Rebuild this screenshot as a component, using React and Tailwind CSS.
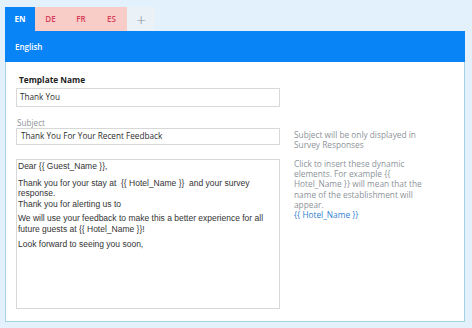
import React from "react";

export default function App() {
  const os = { fontFamily: '"Open Sans", "Noto Sans", sans-serif' };
  const body = { fontFamily: '"Liberation Sans", Arial, sans-serif' };
  return (
    <div className="w-[472px] h-[328px] bg-[#e2f1fb] pt-[7px] pl-[5px] overflow-hidden" style={os}>
      <div className="flex h-[24px] text-[8px] font-semibold">
        <div className="w-[30px] bg-[#0984f7] text-white flex items-center justify-center font-bold">EN</div>
        <div className="flex bg-[#f8cdc7] text-[#d6405a]">
          <div className="w-[31px] flex items-center justify-center">DE</div>
          <div className="w-[30px] flex items-center justify-center">FR</div>
          <div className="w-[31px] flex items-center justify-center">ES</div>
        </div>
        <div className="w-[28px] bg-[#ebf2f7] text-[#8a949c] flex items-center justify-center text-[17px] font-light leading-none">+</div>
      </div>
      <div className="w-[460px] h-[291px] border border-[#a6d2e6] border-t-0 bg-white flex flex-col">
        <div className="h-[31px] bg-[#0984f7] text-white text-[8px] font-semibold flex items-center pl-[10px] -mx-px">English</div>
        <div className="flex pl-[10px] pt-[12px]">
          <div className="w-[264px] flex flex-col">
            <div className="text-[8.3px] font-bold text-[#1e1e1e] leading-[12px] pl-[3px]">Template Name</div>
            <div className="mt-[2px] h-[19px] border border-[#d8d8d8] flex items-center pl-[3px] text-[8.2px] text-[#2e2e2e]">Thank You</div>
            <div className="mt-[11px] text-[8.2px] text-[#8d9399] leading-[10px] pl-[1px]">Subject</div>
            <div className="h-[17px] border border-[#d8d8d8] flex items-center pl-[4px] text-[8.2px] text-[#2e2e2e]">Thank You For Your Recent Feedback</div>
            <div className="mt-[14px] h-[150px] border border-[#d8d8d8] px-[1px] pt-[0.5px] text-[8.5px] leading-[10.5px] text-[#333]" style={body}>
              <p>Dear {"{{"} Guest_Name {"}}"},</p>
              <p className="mt-[6.5px]">Thank you for your stay at&nbsp; {"{{"} Hotel_Name {"}}"}&nbsp; and your survey response.</p>
              <p>Thank you for alerting us to</p>
              <p className="mt-[4px]">We will use your feedback to make this a better experience for all future guests at {"{{"} Hotel_Name {"}}"}!</p>
              <p className="mt-[5px]">Look forward to seeing you soon,</p>
            </div>
          </div>
          <div className="w-[135px] ml-[14px] pt-[56px] text-[8.3px] leading-[10.2px] text-[#8d9399]">
            <p>Subject will be only displayed in Survey Responses</p>
            <p className="mt-[8.5px]">Click to insert these dynamic elements. For example {"{{"} Hotel_Name {"}}"} will mean that the name of the establishment will appear.</p>
            <p className="text-[#2f7fd0]">{"{{"} Hotel_Name {"}}"}</p>
          </div>
        </div>
      </div>
    </div>
  );
}
